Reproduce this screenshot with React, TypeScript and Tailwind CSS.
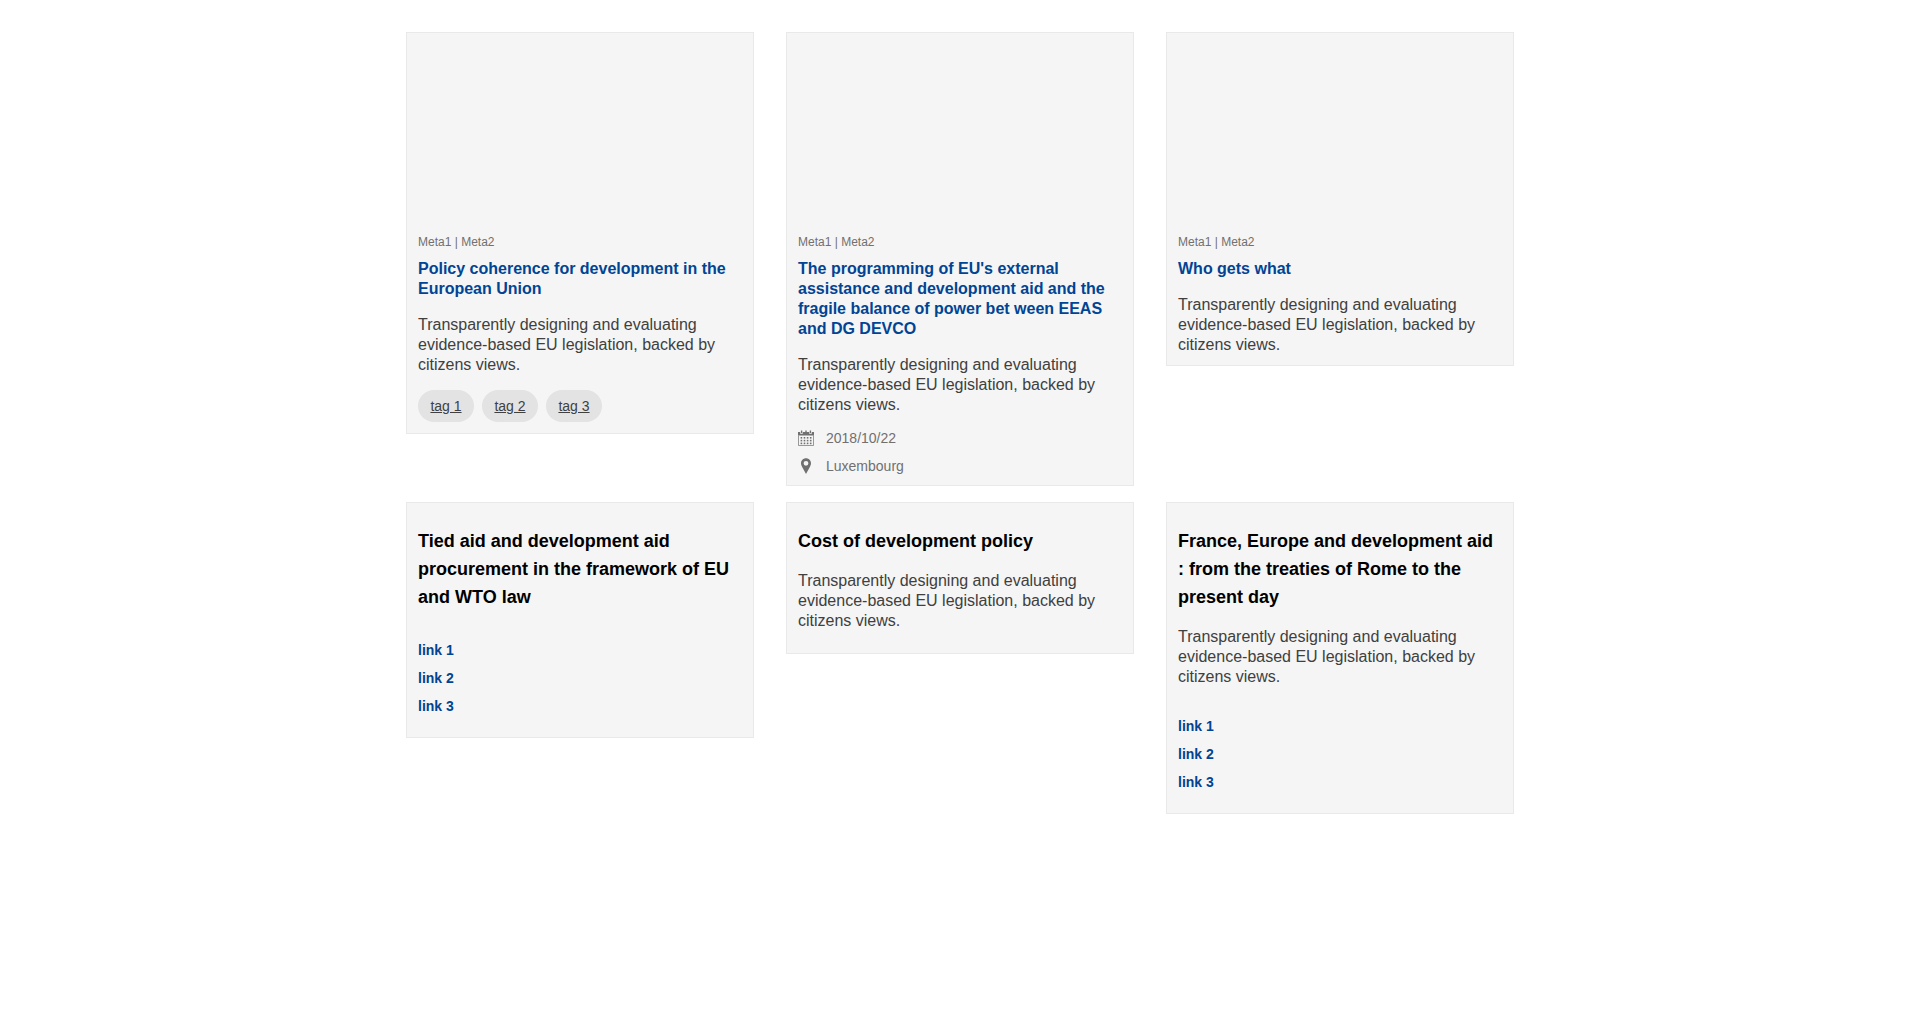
import React from "react";

const DESCRIPTION =
  "Transparently designing and evaluating evidence-based EU legislation, backed by citizens views.";

function Card({ children, spacious = false }: { children: React.ReactNode; spacious?: boolean }) {
  return (
    <article
      className={
        spacious
          ? "border border-[#e9e9e9] bg-[#f5f5f5] px-[11px] pt-6 pb-[22px]"
          : "border border-[#e9e9e9] bg-[#f5f5f5] px-[11px] pt-[11px] pb-[10px]"
      }
    >
      {children}
    </article>
  );
}

function MediaCard({ title, children }: { title: string; children?: React.ReactNode }) {
  return (
    <Card>
      <div className="h-[190px]" aria-hidden="true" />
      <div className="text-xs leading-4 text-[#707070]">Meta1 | Meta2</div>
      <h2 className="mt-[9px] text-base leading-5 font-bold">
        <a href="#" className="text-[#004494] hover:underline">
          {title}
        </a>
      </h2>
      <Description />
      {children}
    </Card>
  );
}

function Description() {
  return <p className="mt-4 text-base leading-5 text-[#404040]">{DESCRIPTION}</p>;
}

function Heading({ children }: { children: React.ReactNode }) {
  return <h2 className="text-lg leading-7 font-bold text-black">{children}</h2>;
}

function Tags() {
  return (
    <ul className="mt-[15px] mb-px flex flex-wrap gap-2">
      {["tag 1", "tag 2", "tag 3"].map((tag) => (
        <li key={tag}>
          <a
            href="#"
            className="block min-w-14 rounded-full bg-[#e3e3e3] px-3 py-2 text-center text-sm leading-4 text-[#404040] underline"
          >
            {tag}
          </a>
        </li>
      ))}
    </ul>
  );
}

function Links() {
  return (
    <ul className="mt-[31px] mb-px flex flex-col gap-3">
      {["link 1", "link 2", "link 3"].map((link) => (
        <li key={link} className="text-sm leading-4 font-bold">
          <a href="#" className="block text-[#004494] hover:underline">
            {link}
          </a>
        </li>
      ))}
    </ul>
  );
}

function CalendarIcon() {
  const columns = [2.6, 5.7, 8.8, 11.9];
  const rows = [7, 9.800, 12.600];
  return (
    <svg className="size-4 shrink-0" viewBox="0 0 16 16" fill="#707070" aria-hidden="true">
      <path d="M0 2h2.200v1.800h2.600V2h6.400v1.800h2.600V2H16v3.600H0z" />
      <path d="M2.900.4h1.400v2.700H2.900zM11.700.4h1.400v2.700h-1.400z" />
      <path d="M7.300.6h1.400v2H7.300z" />
      <path d="M.5 5.500v10h15v-10" fill="none" stroke="#707070" strokeOpacity="0.7" />
      {rows.map((y) =>
        columns.map((x) => <rect key={`${x}-${y}`} x={x} y={y} width="1.6" height="1.6" />),
      )}
    </svg>
  );
}

function PinIcon() {
  return (
    <svg className="size-4 shrink-0" viewBox="0 0 16 16" fill="#707070" aria-hidden="true">
      <path
        fillRule="evenodd"
        d="M8 .3C5.200.3 3 2.500 3 5.300c0 1.400.6 2.700 1.300 4L8 15.900l3.700-6.600c.7-1.300 1.300-2.600 1.300-4C13 2.500 10.800.3 8 .3zM8 7.700a2.400 2.400 0 1 1 0-4.800 2.400 2.400 0 0 1 0 4.800z"
      />
    </svg>
  );
}

function Infos() {
  return (
    <ul className="mt-[15px] mb-px flex flex-col gap-3 text-sm leading-4 text-[#707070]">
      <li className="flex items-center gap-3">
        <CalendarIcon />
        <span>2018/10/22</span>
      </li>
      <li className="flex items-center gap-3">
        <PinIcon />
        <span>Luxembourg</span>
      </li>
    </ul>
  );
}

export default function App() {
  return (
    <main className="mx-auto grid max-w-[1140px] grid-cols-1 items-start gap-x-8 gap-y-4 px-4 py-8 font-['Liberation_Sans',Arial,sans-serif] md:grid-cols-3">
      <MediaCard title="Policy coherence for development in the European Union">
        <Tags />
      </MediaCard>
      <MediaCard title="The programming of EU's external assistance and development aid and the fragile balance of power bet ween EEAS and DG DEVCO">
        <Infos />
      </MediaCard>
      <MediaCard title="Who gets what" />
      <Card spacious>
        <Heading>Tied aid and development aid procurement in the framework of EU and WTO law</Heading>
        <Links />
      </Card>
      <Card spacious>
        <Heading>Cost of development policy</Heading>
        <Description />
      </Card>
      <Card spacious>
        <Heading>France, Europe and development aid : from the treaties of Rome to the present day</Heading>
        <Description />
        <Links />
      </Card>
    </main>
  );
}
